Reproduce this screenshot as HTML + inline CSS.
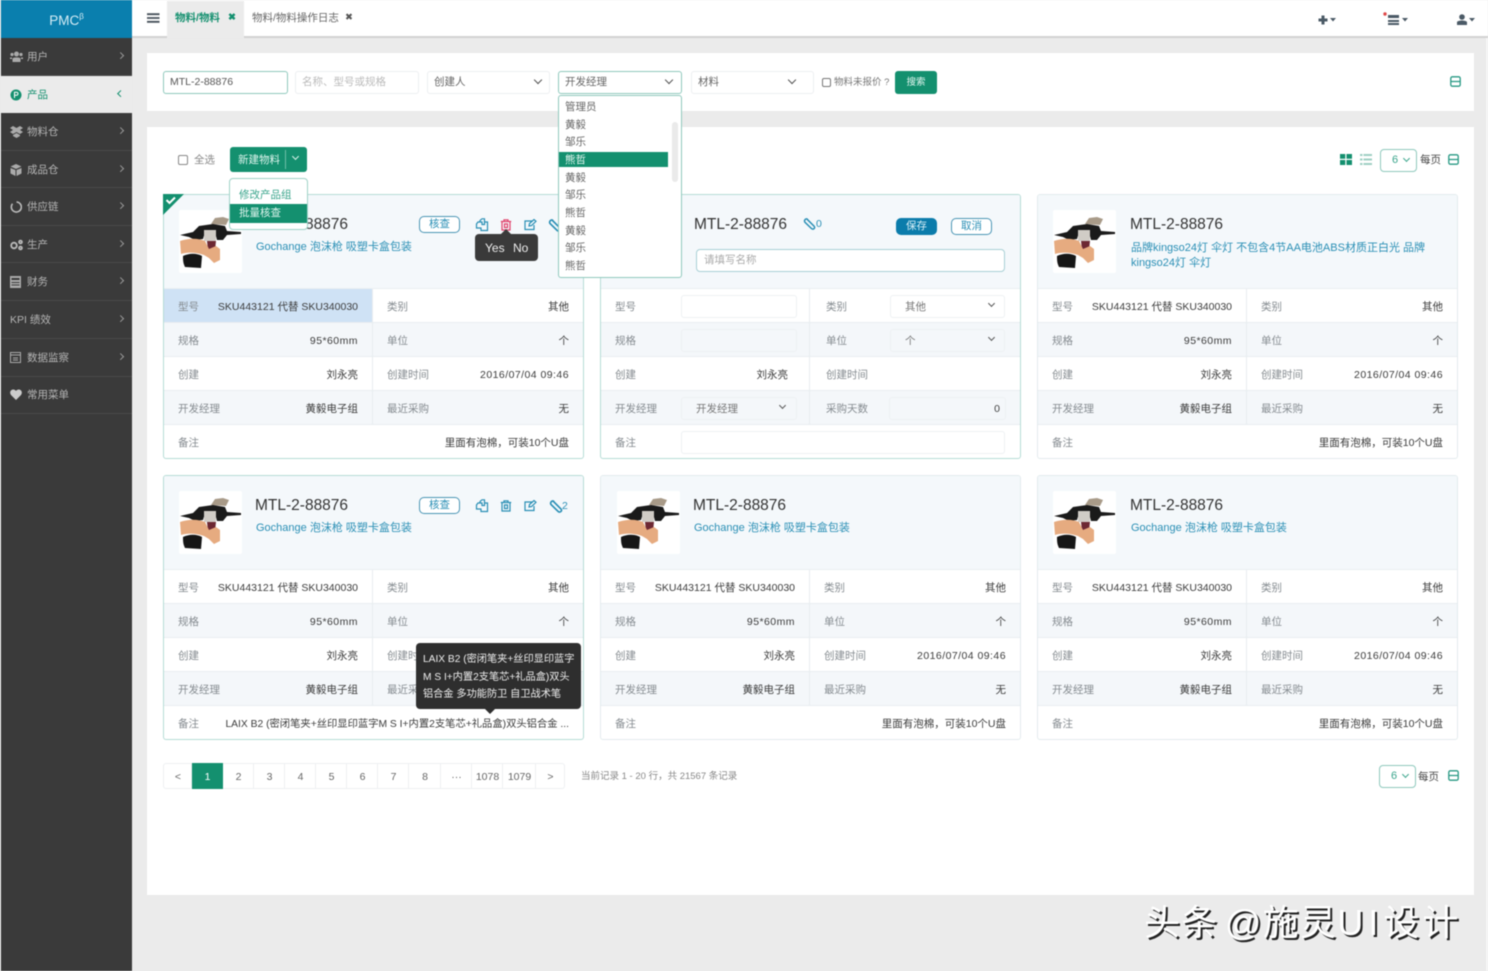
<!DOCTYPE html>
<html lang="zh"><head><meta charset="utf-8"><title>PMC</title>
<style>
*{box-sizing:border-box;margin:0;padding:0}
html,body{width:1488px;height:971px;overflow:hidden;background:#ebebeb}
body{position:relative;font:10.5px/1.3 "Liberation Sans","Noto Sans CJK SC",sans-serif;color:#4a4a4a}
#w{position:absolute;left:0;top:0;width:1488px;height:971px;filter:blur(.4px);overflow:hidden}
.a{position:absolute}
.t{position:absolute;white-space:nowrap}
#side{position:absolute;left:1px;top:0;width:131px;height:971px;background:#3a3a3a}
#logo{position:absolute;left:1px;top:0;width:131px;height:38px;background:#0a7fae;color:#d5ecf5;font-size:13.500px;text-align:center;line-height:42px}
#logo sup{font-size:8px;line-height:0;vertical-align:6px}
.m{position:absolute;left:1px;width:131px;height:38px;border-bottom:1px solid #4a4a4a;color:#b5b5b5;line-height:39px;padding-left:26px}
.m svg{position:absolute;left:9px;top:13px}
.m u{position:absolute;left:115px;top:13px;width:5px;height:5px;border-top:1px solid #999;border-right:1px solid #999;transform:rotate(45deg) translate(3px,0)}
#hd{position:absolute;left:132px;top:0;width:1356px;height:38px;background:#fff;border-bottom:2px solid #d2d2d2}
.panel{position:absolute;left:147px;width:1327px;background:#fff}
.f{position:absolute;height:23px;background:#fff;border:1px solid #eceff1;border-radius:3px;padding-left:6px;line-height:21px;color:#666}
.f.g{border-color:#8fc9bd}
.ch{position:absolute;width:6px;height:6px;border-right:1px solid #555;border-bottom:1px solid #555;transform:rotate(45deg)}
.btn{position:absolute;background:#14906f;color:#dff5ee;border-radius:3px;text-align:center}
.card{position:absolute;width:421px;height:265px;border:1px solid #e3ebee;border-radius:3px;background:#fff;overflow:hidden}
.card.s{border-color:#b6dcd6}
.hb{height:94px;background:#f4f8fb;border-bottom:1px solid #eaeff2;position:relative}
.pic{position:absolute;left:15px;top:15px;width:63px;height:63px;background:#fff;border-radius:2px}
.ti{position:absolute;left:91px;top:20px;font-size:15.5px;color:#333;white-space:nowrap}
.su{position:absolute;left:92px;top:45px;font-size:11px;color:#2a8fb5;white-space:nowrap;line-height:15px}
.card.k .ti{left:92px}
.card.k .su{left:93px}
.ck{position:absolute;top:21px;width:41px;height:17px;border:1px solid #4a95b5;border-radius:5px;color:#2a8fb5;text-align:center;line-height:15px;background:#fff}
.ic{position:absolute;top:23px;stroke:#2a8fb5;fill:none;stroke-width:1.2}
.r{display:flex;height:34px;line-height:37px;border-bottom:1px solid #e8edf0;position:relative}
.r:nth-of-type(odd){background:#f4f7fa}
.r.e{border-bottom:0;height:33px}
.c{display:flex;justify-content:space-between;padding:0 14px;flex:1;white-space:nowrap}
.c.l{flex:0 0 209px;border-right:1px solid #e8edf0;padding:0 14px}
.c i{font-style:normal;color:#858b90}
.c b{font-weight:400;color:#3c3c3c}
.c b.d{letter-spacing:.45px}
.r.hl .c.l{background:#cfe2f5}
.in{position:absolute;height:23px;top:6px;border:1px solid #eef1f3;border-radius:3px;background:inherit;line-height:23px;padding-left:14px;color:#777}
.tip{position:absolute;background:#2e2e2e;color:#eee;border-radius:4px}
.pg{position:absolute;top:763px;height:26px;border:1px solid #eef0f2;border-left:0;text-align:center;line-height:26px;color:#666;background:#fff;padding-left:1px}
#wm{position:absolute;left:1144px;top:900px;font-size:36px;letter-spacing:1.3px;word-spacing:-5px;line-height:46px;color:#fff;text-shadow:2px 2px 0 #222;white-space:nowrap}
</style></head><body><div id="w">
<svg width="0" height="0" style="position:absolute"><defs>
<symbol id="gun" viewBox="0 0 63 63">
<path d="M32 14l4-6 8-1 6 2-3 6z" fill="#a89a88"/>
<path d="M1 25l13-3 6-6 14-2 12 2 2 5 14 1v2l-14 1-4 5h-6l-2-8H26l-2 7-8 1-6-3z" fill="#1a1a1a"/>
<path d="M25 20h12v11H25z" fill="#d0ccc6"/>
<path d="M28 31h9l-1 9h-7z" fill="#6d2833"/>
<path d="M4 46c6-3 14-3 19 0l-1 12-16-1c-2-4-2-7-2-11z" fill="#161616"/>
<path d="M1 31c9-3 18-3 25 0l4 8 7-3 4 3v11l-6 3-5-5-5-3c-8-3-17-3-23-1z" fill="#e6ab80"/>
</symbol>
<symbol id="copy" viewBox="0 0 14 14"><path d="M5 4V2.500L7 .8h2.500v3M3 4h4v2.500H9.500V4H12.500v8.500H6V10H1.500V6z"/></symbol>
<symbol id="del" viewBox="0 0 14 14"><path d="M3 3.500v8.500h8V3.500M1.800 3.500h10.400M5 3.500V1.800h4v1.700M5.500 6h3v3.500h-3z"/></symbol>
<symbol id="edit" viewBox="0 0 14 14"><path d="M10 3H2v8.500h9V7M6 8l.5-2.500L11 1.500l2 1.800-4.500 4.300z"/></symbol>
<symbol id="clip" viewBox="0 0 14 14"><path d="M4.500 2.500l7.500 7.500c1.500 2-1 4-2.800 2.500L2 5.500C.8 3.500 3 1 5 2.500" stroke-width="1.600"/></symbol>
<symbol id="min" viewBox="0 0 11 11"><rect x=".8" y=".8" width="9.400" height="9.400" rx="1.500" fill="none" stroke="#2a9a85" stroke-width="1.300"/><path d="M1 5.500h9" stroke="#2a9a85" stroke-width="1.300"/></symbol>
</defs></svg>

<div id="side"></div>
<div id="logo">PMC<sup>β</sup></div>

<div class="m" style="top:38px"><svg width="13" height="12" viewBox="0 0 13 12" fill="#aaa"><circle cx="6.500" cy="3" r="2.500"/><circle cx="2" cy="3.500" r="1.600"/><circle cx="11" cy="3.500" r="1.600"/><path d="M2.500 11V7.500c1-1.500 7-1.500 8 0V11zM0 8V6.500h2V8zM11 8V6.500h2V8z"/></svg>用户<u></u></div>
<div class="m" style="top:76px;height:37px;background:#ebebeb;color:#14906f;border:0"><svg width="12" height="12" viewBox="0 0 12 12"><circle cx="6" cy="6" r="5.500" fill="#14906f"/><path d="M4.500 9V3.300h2c2 0 2 3 0 3h-2" stroke="#fff" fill="none"/></svg>产品<u style="transform:rotate(225deg) translate(-3px,0);border-color:#14906f"></u></div>
<div class="m" style="top:113px"><svg width="13" height="12" viewBox="0 0 13 12" fill="#aaa"><path d="M0 2l3-2 3.500 2L10 0l3 2-3 2 3 2-3 2-3.500-2L3 8 0 6l3-2zM3 9l3.500-2L10 9v1l-3.500 2L3 10z"/></svg>物料仓<u></u></div>
<div class="m" style="top:151px;height:37px;line-height:38px"><svg width="12" height="12" viewBox="0 0 12 12" fill="#aaa"><path d="M6 0l5.500 2.500L6 5 .5 2.500zM.5 4L5.500 6v6L.5 9.500zM11.500 4L6.500 6v6l5-2.500z"/></svg>成品仓<u></u></div>
<div class="m" style="top:188px"><svg width="12" height="12" viewBox="0 0 12 12" fill="none" stroke="#bbb" stroke-width="1.600"><path d="M6.500 1a5 5 0 1 1-4 1.800"/></svg>供应链<u></u></div>
<div class="m" style="top:226px;height:37px;line-height:38px"><svg width="13" height="12" viewBox="0 0 13 12" fill="none" stroke="#bbb" stroke-width="1.800"><circle cx="4" cy="6.500" r="2.800"/><circle cx="10.500" cy="3" r="1.400"/><circle cx="10.500" cy="9" r="1.400"/></svg>生产<u></u></div>
<div class="m" style="top:263px"><svg width="11" height="12" viewBox="0 0 11 12" fill="#aaa"><path d="M0 0h11v12H0zM1.500 2v2h8V2zM1.500 6v1h8V6zM1.500 8.500v1h8v-1z"/></svg>财务<u></u></div>
<div class="m" style="top:301px;padding-left:9px">KPI 绩效<u></u></div>
<div class="m" style="top:339px"><svg width="11" height="11" viewBox="0 0 11 11" fill="none" stroke="#aaa"><rect x=".5" y=".5" width="10" height="10"/><path d="M.5 3h10M3 6h5M3 8h5"/></svg>数据监察<u></u></div>
<div class="m" style="top:376px"><svg width="12" height="11" viewBox="0 0 12 11" fill="#ccc"><path d="M6 11L1 6C-1 3 1 .5 3.300.5 4.500.5 5.500 1.200 6 2c.5-.8 1.500-1.500 2.700-1.500C11 .5 13 3 11 6z"/></svg>常用菜单</div>

<div id="hd"></div>
<svg class="a" style="left:147px;top:13px" width="13" height="10"><path d="M0 1.200h12.500M0 5h12.500M0 8.800h12.500" stroke="#46505a" stroke-width="1.800"/></svg>
<div class="a" style="left:167px;top:1px;width:77px;height:37px;background:#ebebeb"></div>
<div class="t" style="left:175px;top:12px;color:#14906f;font-weight:700">物料/物料</div>
<div class="t" style="left:228px;top:12px;color:#14906f;font-weight:700;font-size:9.500px">✖</div>
<div class="t" style="left:252px;top:12px;color:#666">物料/物料操作日志</div>
<div class="t" style="left:345px;top:12px;color:#555;font-size:9.500px">✖</div>
<svg class="a" style="left:1318px;top:14px" width="20" height="11" fill="#4b5a66"><path d="M3.500 1.500h3v3h3v3h-3v3h-3v-3h-3v-3h3zM12 4h6l-3 3.500z"/></svg>
<svg class="a" style="left:1383px;top:11px" width="26" height="16"><circle cx="2" cy="3" r="1.700" fill="#e04848"/><path d="M5 4h11v3H5zM5 9h11v2H5zM5 12h11v2H5z" fill="#4b5a66"/><path d="M19 7h6l-3 3.500z" fill="#4b5a66"/></svg>
<svg class="a" style="left:1457px;top:14px" width="20" height="12" fill="#4b5a66"><circle cx="5" cy="3" r="2.800"/><path d="M0 11V8c1-2 9-2 10 0v3zM12 4h6l-3 3.500z"/></svg>
<div class="a" style="left:1486px;top:38px;width:2px;height:933px;background:#f6f6f6"></div>

<div class="panel" style="top:53px;height:58px"></div>
<div class="f g" style="left:163px;top:71px;width:125px;color:#555">MTL-2-88876</div>
<div class="f" style="left:295px;top:71px;width:124px;color:#bbb">名称、型号或规格</div>
<div class="f" style="left:427px;top:71px;width:123px">创建人<span class="ch" style="left:107px;top:5px"></span></div>
<div class="f g" style="left:558px;top:71px;width:124px">开发经理<span class="ch" style="left:107px;top:5px"></span></div>
<div class="f" style="left:691px;top:71px;width:123px">材料<span class="ch" style="left:97px;top:5px"></span></div>
<div class="a" style="left:822px;top:78px;width:9px;height:9px;border:1px solid #777;border-radius:2px"></div>
<div class="t" style="left:834px;top:77px;font-size:9.500px;color:#777">物料未报价 ?</div>
<div class="btn" style="left:895px;top:71px;width:42px;height:23px;line-height:24px;font-size:9.500px">搜索</div>
<svg class="a" style="left:1450px;top:76px" width="11" height="11"><use href="#min"/></svg>

<div class="panel" style="top:127px;height:768px"></div>
<div class="a" style="left:178px;top:155px;width:10px;height:10px;border:1px solid #888;border-radius:2px"></div>
<div class="t" style="left:194px;top:154px;color:#888">全选</div>
<div class="btn" style="left:230px;top:147px;width:77px;height:25px;line-height:27px;text-align:left;padding-left:8px">新建物料<span class="a" style="left:55px;top:3px;width:1px;height:19px;background:#6fbfa8"></span><span class="ch" style="left:63px;top:7px;width:5px;height:5px;border-color:#dff5ee"></span></div>

<!-- cards -->
<div class="card s" style="left:163px;top:194px">
<div class="hb"><svg class="pic"><use href="#gun"/></svg>
<div class="ti">MTL-2-88876</div><div class="su">Gochange 泡沫枪 吸塑卡盒包装</div>
<div class="ck" style="left:255px">核查</div>
<svg class="ic" style="left:311px" width="14" height="14"><use href="#copy"/></svg>
<svg class="ic" style="left:335px;stroke:#e0416b" width="14" height="14"><use href="#del"/></svg>
<svg class="ic" style="left:359px" width="14" height="14"><use href="#edit"/></svg>
<svg class="ic" style="left:384px" width="14" height="14"><use href="#clip"/></svg></div>
<div class="r hl"><div class="c l"><i>型号</i><b>SKU443121 代替 SKU340030</b></div><div class="c"><i>类别</i><b>其他</b></div></div>
<div class="r"><div class="c l"><i>规格</i><b class="d">95*60mm</b></div><div class="c"><i>单位</i><b>个</b></div></div>
<div class="r"><div class="c l"><i>创建</i><b>刘永亮</b></div><div class="c"><i>创建时间</i><b class="d">2016/07/04 09:46</b></div></div>
<div class="r"><div class="c l"><i>开发经理</i><b>黄毅电子组</b></div><div class="c"><i>最近采购</i><b>无</b></div></div>
<div class="r e"><div class="c"><i>备注</i><b>里面有泡棉，可装10个U盘</b></div></div>
</div>

<div class="card s" style="left:600px;top:194px">
<div class="hb"><svg class="pic"><use href="#gun"/></svg>
<div class="ti" style="left:93px">MTL-2-88876</div>
<svg class="ic" style="left:202px;top:22px" width="13" height="13"><use href="#clip"/></svg>
<div class="t" style="left:215px;top:23px;color:#2a8fb5">0</div>
<div class="ck" style="left:295px;top:23px;background:#0b7cab;border-color:#0b7cab;color:#d9f0f8">保存</div>
<div class="ck" style="left:350px;top:23px">取消</div>
<div class="a" style="left:95px;top:54px;width:309px;height:23px;border:1px solid #a9d0d6;border-radius:4px;background:#fff;color:#aaa;line-height:21px;padding-left:7px">请填写名称</div></div>
<div class="r"><div class="c l"><i>型号</i></div><div class="c" style="padding-left:16px"><i>类别</i></div><div class="in" style="left:80px;width:116px;background:#fff"></div><div class="in" style="left:289px;width:115px;background:#fff">其他<span class="ch" style="left:98px;top:5px;width:5px;height:5px"></span></div></div>
<div class="r"><div class="c l"><i>规格</i></div><div class="c" style="padding-left:16px"><i>单位</i></div><div class="in" style="left:80px;width:116px"></div><div class="in" style="left:289px;width:115px">个<span class="ch" style="left:98px;top:5px;width:5px;height:5px"></span></div></div>
<div class="r"><div class="c l" style="padding-right:21px"><i>创建</i><b>刘永亮</b></div><div class="c" style="padding-left:16px"><i>创建时间</i></div></div>
<div class="r"><div class="c l"><i>开发经理</i></div><div class="c" style="padding-left:16px"><i>采购天数</i></div><div class="in" style="left:80px;width:116px">开发经理<span class="ch" style="left:98px;top:5px;width:5px;height:5px"></span></div><div class="in" style="left:288px;width:117px;text-align:right;padding-right:5px;color:#444">0</div></div>
<div class="r e"><div class="c"><i>备注</i></div><div class="in" style="left:80px;width:324px;background:#fff"></div></div>
</div>

<div class="card k" style="left:1037px;top:194px">
<div class="hb"><svg class="pic"><use href="#gun"/></svg>
<div class="ti">MTL-2-88876</div><div class="su" style="white-space:normal;width:310px;top:46px">品牌kingso24灯 伞灯 不包含4节AA电池ABS材质正白光 品牌 kingso24灯 伞灯</div></div>
<div class="r"><div class="c l"><i>型号</i><b>SKU443121 代替 SKU340030</b></div><div class="c"><i>类别</i><b>其他</b></div></div>
<div class="r"><div class="c l"><i>规格</i><b class="d">95*60mm</b></div><div class="c"><i>单位</i><b>个</b></div></div>
<div class="r"><div class="c l"><i>创建</i><b>刘永亮</b></div><div class="c"><i>创建时间</i><b class="d">2016/07/04 09:46</b></div></div>
<div class="r"><div class="c l"><i>开发经理</i><b>黄毅电子组</b></div><div class="c"><i>最近采购</i><b>无</b></div></div>
<div class="r e"><div class="c"><i>备注</i><b>里面有泡棉，可装10个U盘</b></div></div>
</div>

<div class="card s" style="left:163px;top:475px">
<div class="hb"><svg class="pic"><use href="#gun"/></svg>
<div class="ti">MTL-2-88876</div><div class="su">Gochange 泡沫枪 吸塑卡盒包装</div>
<div class="ck" style="left:255px">核查</div>
<svg class="ic" style="left:311px" width="14" height="14"><use href="#copy"/></svg>
<svg class="ic" style="left:335px" width="14" height="14"><use href="#del"/></svg>
<svg class="ic" style="left:359px" width="14" height="14"><use href="#edit"/></svg>
<svg class="ic" style="left:385px" width="14" height="14"><use href="#clip"/></svg>
<div class="t" style="left:398px;top:24px;color:#2a8fb5">2</div></div>
<div class="r"><div class="c l"><i>型号</i><b>SKU443121 代替 SKU340030</b></div><div class="c"><i>类别</i><b>其他</b></div></div>
<div class="r"><div class="c l"><i>规格</i><b class="d">95*60mm</b></div><div class="c"><i>单位</i><b>个</b></div></div>
<div class="r"><div class="c l"><i>创建</i><b>刘永亮</b></div><div class="c"><i>创建时间</i><b class="d">2016/07/04 09:46</b></div></div>
<div class="r"><div class="c l"><i>开发经理</i><b>黄毅电子组</b></div><div class="c"><i>最近采购</i><b>无</b></div></div>
<div class="r e"><div class="c"><i>备注</i><b style="font-size:10.300px">LAIX B2 (密闭笔夹+丝印显印蓝字M S I+内置2支笔芯+礼品盒)双头铝合金 ...</b></div></div>
</div>

<div class="card k" style="left:600px;top:475px">
<div class="hb"><svg class="pic" style="left:16px"><use href="#gun"/></svg>
<div class="ti">MTL-2-88876</div><div class="su">Gochange 泡沫枪 吸塑卡盒包装</div></div>
<div class="r"><div class="c l"><i>型号</i><b>SKU443121 代替 SKU340030</b></div><div class="c"><i>类别</i><b>其他</b></div></div>
<div class="r"><div class="c l"><i>规格</i><b class="d">95*60mm</b></div><div class="c"><i>单位</i><b>个</b></div></div>
<div class="r"><div class="c l"><i>创建</i><b>刘永亮</b></div><div class="c"><i>创建时间</i><b class="d">2016/07/04 09:46</b></div></div>
<div class="r"><div class="c l"><i>开发经理</i><b>黄毅电子组</b></div><div class="c"><i>最近采购</i><b>无</b></div></div>
<div class="r e"><div class="c"><i>备注</i><b>里面有泡棉，可装10个U盘</b></div></div>
</div>

<div class="card k" style="left:1037px;top:475px">
<div class="hb"><svg class="pic"><use href="#gun"/></svg>
<div class="ti">MTL-2-88876</div><div class="su">Gochange 泡沫枪 吸塑卡盒包装</div></div>
<div class="r"><div class="c l"><i>型号</i><b>SKU443121 代替 SKU340030</b></div><div class="c"><i>类别</i><b>其他</b></div></div>
<div class="r"><div class="c l"><i>规格</i><b class="d">95*60mm</b></div><div class="c"><i>单位</i><b>个</b></div></div>
<div class="r"><div class="c l"><i>创建</i><b>刘永亮</b></div><div class="c"><i>创建时间</i><b class="d">2016/07/04 09:46</b></div></div>
<div class="r"><div class="c l"><i>开发经理</i><b>黄毅电子组</b></div><div class="c"><i>最近采购</i><b>无</b></div></div>
<div class="r e"><div class="c"><i>备注</i><b>里面有泡棉，可装10个U盘</b></div></div>
</div>

<!-- corner check -->
<svg class="a" style="left:163px;top:194px" width="22" height="22"><path d="M0 0h21L0 21z" fill="#14906f"/><path d="M3.500 6l3 3 5.500-5.500" stroke="#fff" stroke-width="2" fill="none"/></svg>

<!-- new menu -->
<div class="a" style="left:229px;top:178px;width:79px;height:52px;background:#fff;border:1px solid #9fd2c7;border-radius:4px;overflow:hidden"><div class="t" style="left:9px;top:10px;color:#3aa58c">修改产品组</div><div class="a" style="left:0;top:25px;width:77px;height:19px;background:#14906f;color:#dff5ee;padding-left:9px;line-height:19px">批量核查</div></div>

<!-- select dropdown -->
<div class="a" style="left:558px;top:95px;width:124px;height:183px;background:#fff;border:1px solid #8fc9bd;border-radius:3px"></div>
<div class="a" style="left:559px;top:152px;width:109px;height:15px;background:#14906f"></div>
<div class="a" style="left:672px;top:122px;width:6px;height:60px;background:#eaeaea;border-radius:3px"></div>
<div class="t" style="left:565px;top:101px;color:#666">管理员</div>
<div class="t" style="left:565px;top:119px;color:#666">黄毅</div>
<div class="t" style="left:565px;top:136px;color:#666">邹乐</div>
<div class="t" style="left:565px;top:154px;color:#e8f7f2">熊哲</div>
<div class="t" style="left:565px;top:172px;color:#666">黄毅</div>
<div class="t" style="left:565px;top:189px;color:#666">邹乐</div>
<div class="t" style="left:565px;top:207px;color:#666">熊哲</div>
<div class="t" style="left:565px;top:225px;color:#666">黄毅</div>
<div class="t" style="left:565px;top:242px;color:#666">邹乐</div>
<div class="t" style="left:565px;top:260px;color:#666">熊哲</div>

<!-- tips -->
<div class="tip" style="left:475px;top:234px;width:63px;height:27px;background:#3a3a3a;font-size:12px;line-height:28px"><span class="t" style="left:10px">Yes</span><span class="t" style="left:38px">No</span></div>
<div class="a" style="left:501px;top:229px;width:0;height:0;border:5px solid transparent;border-top:0;border-bottom-color:#3a3a3a"></div>
<div class="tip" style="left:416px;top:643px;width:165px;height:66px"><div class="t" style="left:7px;top:10px;font-size:10.200px">LAIX B2 (密闭笔夹+丝印显印蓝字</div><div class="t" style="left:7px;top:28px;font-size:10.200px">M S I+内置2支笔芯+礼品盒)双头</div><div class="t" style="left:7px;top:45px;font-size:10.200px">铝合金 多功能防卫 自卫战术笔</div></div>
<div class="a" style="left:485px;top:709px;width:0;height:0;border:5px solid transparent;border-bottom:0;border-top-color:#2e2e2e"></div>

<!-- top right toolbar -->
<svg class="a" style="left:1340px;top:154px" width="12" height="11" fill="#14906f"><path d="M0 0h5.300v4.800H0zM6.500 0H12v4.800H6.500zM0 6h5.300v5H0zM6.500 6H12v5H6.500z"/></svg>
<svg class="a" style="left:1360px;top:154px" width="12" height="11" fill="#9fcfc3"><path d="M0 0h2.500v2H0zM3.500 0H12v2H3.500zM0 4.500h2.500v2H0zM3.500 4.500H12v2H3.500zM0 9h2.500v2H0zM3.500 9H12v2H3.500z"/></svg>
<div class="f g" style="left:1380px;top:149px;width:37px;border-radius:4px;padding-left:11px;color:#3aa58c;font-size:11px">6<span class="ch" style="left:23px;top:6px;width:5px;height:5px;border-color:#3aa58c"></span></div>
<div class="t" style="left:1420px;top:154px;color:#444">每页</div>
<svg class="a" style="left:1448px;top:154px" width="11" height="11"><use href="#min"/></svg>

<!-- pagination -->
<div class="pg" style="left:163px;width:29px;border-left:1px solid #eef0f2;border-radius:3px 0 0 3px">&lt;</div>
<div class="pg" style="left:192px;width:31px;background:#14906f;color:#fff;border-color:#14906f">1</div>
<div class="pg" style="left:223px;width:31px">2</div>
<div class="pg" style="left:254px;width:31px">3</div>
<div class="pg" style="left:285px;width:31px">4</div>
<div class="pg" style="left:316px;width:31px">5</div>
<div class="pg" style="left:347px;width:31px">6</div>
<div class="pg" style="left:378px;width:31px">7</div>
<div class="pg" style="left:409px;width:32px">8</div>
<div class="pg" style="left:441px;width:31px">···</div>
<div class="pg" style="left:472px;width:31px">1078</div>
<div class="pg" style="left:503px;width:33px">1079</div>
<div class="pg" style="left:536px;width:29px;border-radius:0 3px 3px 0">&gt;</div>
<div class="t" style="left:581px;top:771px;font-size:9.500px;color:#888">当前记录 1 - 20 行，共 21567 条记录</div>
<div class="f g" style="left:1379px;top:765px;width:37px;border-radius:4px;padding-left:11px;color:#3aa58c;font-size:11px">6<span class="ch" style="left:23px;top:6px;width:5px;height:5px;border-color:#3aa58c"></span></div>
<div class="t" style="left:1418px;top:771px;color:#444">每页</div>
<svg class="a" style="left:1448px;top:770px" width="11" height="11"><use href="#min"/></svg>

<div id="wm">头条 @施灵<span style="letter-spacing:5px">UI</span><span style="letter-spacing:3px">设计</span></div>
</div></body></html>
